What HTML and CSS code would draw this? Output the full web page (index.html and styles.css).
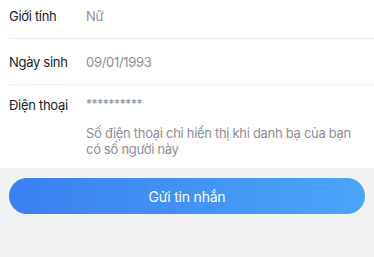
FILE: index.html
```html
<!DOCTYPE html>
<html lang="vi">
<head>
<meta charset="utf-8">
<link rel="stylesheet" href="styles.css">
</head>
<body>
<div class="card">
  <div class="row">
    <div class="label">Giới tính</div>
    <div class="value">Nữ</div>
  </div>
  <div class="row">
    <div class="label">Ngày sinh</div>
    <div class="value">09/01/1993</div>
  </div>
  <div class="row row-phone">
    <div class="label">Điện thoại</div>
    <div class="value-col">
      <div class="value stars">**********</div>
      <div class="hint">Số điện thoại chỉ hiển thị khi danh bạ của bạn có số người này</div>
    </div>
  </div>
</div>
<div class="actions">
  <button class="send">Gửi tin nhắn</button>
</div>
</body>
</html>
```
FILE: styles.css
```css
html, body {
  margin: 0;
  padding: 0;
}
body {
  background: #f1f2f4;
  font-family: Inter, "Noto Sans", sans-serif;
  font-size: 13px;
  line-height: 16px;
  letter-spacing: -0.3px;
  color: #1c1c1e;
  width: 374px;
  height: 257px;
  overflow: hidden;
}
.card {
  background: #fff;
  margin-top: -7px;
  padding-left: 9px;
}
.row {
  display: flex;
  padding: 15px 0 14px;
  border-bottom: 1px solid #ebebee;
}
.row-phone {
  padding: 12px 0 11px;
  border-bottom: none;
}
.label {
  width: 77px;
  flex: none;
  color: #1c1c1e;
}
.value {
  color: #8e8e93;
}
.stars {
  letter-spacing: -0.4px;
  font-size: 12px;
  line-height: 14px;
  padding-bottom: 2px;
}
.value-col {
  flex: 1;
  padding-right: 14px;
}
.hint {
  margin-top: 12px;
  color: #8e8e93;
  line-height: 16px;
}
.actions {
  padding: 10px 9px 0;
}
.send {
  display: block;
  width: 100%;
  height: 36px;
  border: none;
  border-radius: 18px;
  background: linear-gradient(90deg, #3a80f1 0%, #4aa5f9 100%);
  color: #fff;
  font-family: Inter, "Noto Sans", sans-serif;
  font-size: 14px;
  letter-spacing: -0.2px;
  padding: 0;
}
```
